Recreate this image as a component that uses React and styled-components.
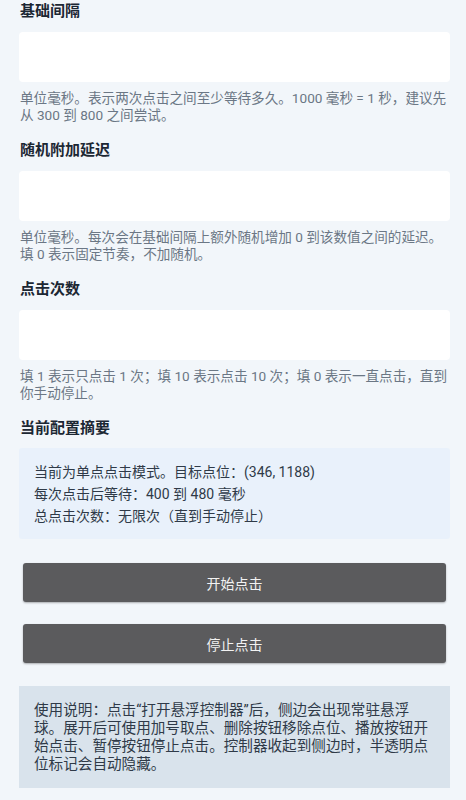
import React from "react";
import styled, { createGlobalStyle } from "styled-components";

const GlobalStyle = createGlobalStyle`
  html, body {
    margin: 0;
    padding: 0;
    background: #f2f6fa;
  }
  body {
    font-family: Roboto, "Noto Sans CJK SC", sans-serif;
  }
`;

const fields = [
  {
    title: "基础间隔",
    help: "单位毫秒。表示两次点击之间至少等待多久。1000 毫秒 = 1 秒，建议先从 300 到 800 之间尝试。",
  },
  {
    title: "随机附加延迟",
    help: "单位毫秒。每次会在基础间隔上额外随机增加 0 到该数值之间的延迟。填 0 表示固定节奏，不加随机。",
  },
  {
    title: "点击次数",
    help: "填 1 表示只点击 1 次；填 10 表示点击 10 次；填 0 表示一直点击，直到你手动停止。",
  },
];

const App = () => {
  return (
    <Page>
      <GlobalStyle />
      {fields.map((f) => (
        <Field key={f.title}>
          <Title>{f.title}</Title>
          <Input />
          <Help>{f.help}</Help>
        </Field>
      ))}

      <Title>当前配置摘要</Title>
      <Summary>
        <div>当前为单点点击模式。目标点位：(346, 1188)</div>
        <div>每次点击后等待：400 到 480 毫秒</div>
        <div>总点击次数：无限次（直到手动停止）</div>
      </Summary>

      <Buttons>
        <Button>开始点击</Button>
        <Button>停止点击</Button>
      </Buttons>

      <Notice>
        使用说明：点击“打开悬浮控制器”后，侧边会出现常驻悬浮球。展开后可使用加号取点、删除按钮移除点位、播放按钮开始点击、暂停按钮停止点击。控制器收起到侧边时，半透明点位标记会自动隐藏。
      </Notice>
    </Page>
  );
};

export default App;

const Page = styled.div`
  padding: 0 16px 20px 19px;
  display: flex;
  flex-direction: column;
`;

const Field = styled.div`
  display: flex;
  flex-direction: column;
  margin-bottom: 15px;
`;

const Title = styled.div`
  font-size: 15px;
  line-height: 22px;
  font-weight: bold;
  color: #1c2733;
  padding-left: 1px;
`;

const Input = styled.div`
  height: 50px;
  margin-top: 10px;
  background: #ffffff;
  border-radius: 4px;
`;

const Help = styled.div`
  margin-top: 8px;
  font-size: 13.6px;
  line-height: 17px;
  color: #6b7785;
  padding-left: 1px;
`;

const Summary = styled.div`
  margin-top: 9px;
  padding: 13px 15px 12px;
  background: #e9f1fb;
  border-radius: 3px;
  font-size: 14px;
  line-height: 22px;
  color: #2f3a48;
`;

const Buttons = styled.div`
  display: flex;
  flex-direction: column;
  gap: 22px;
  margin: 24px 4px 0;
`;

const Button = styled.button`
  height: 39px;
  border: none;
  border-radius: 3px;
  background: #5b5b5d;
  color: #f2f2f2;
  font-family: Roboto, "Noto Sans CJK SC", sans-serif;
  font-size: 14px;
  box-shadow: 0 1px 2px rgba(0, 0, 0, 0.3);
`;

const Notice = styled.div`
  margin-top: 23px;
  padding: 15px 15px 15px 15px;
  background: #d9e3ec;
  font-size: 14.6px;
  line-height: 18px;
  color: #2f3a48;
`;
